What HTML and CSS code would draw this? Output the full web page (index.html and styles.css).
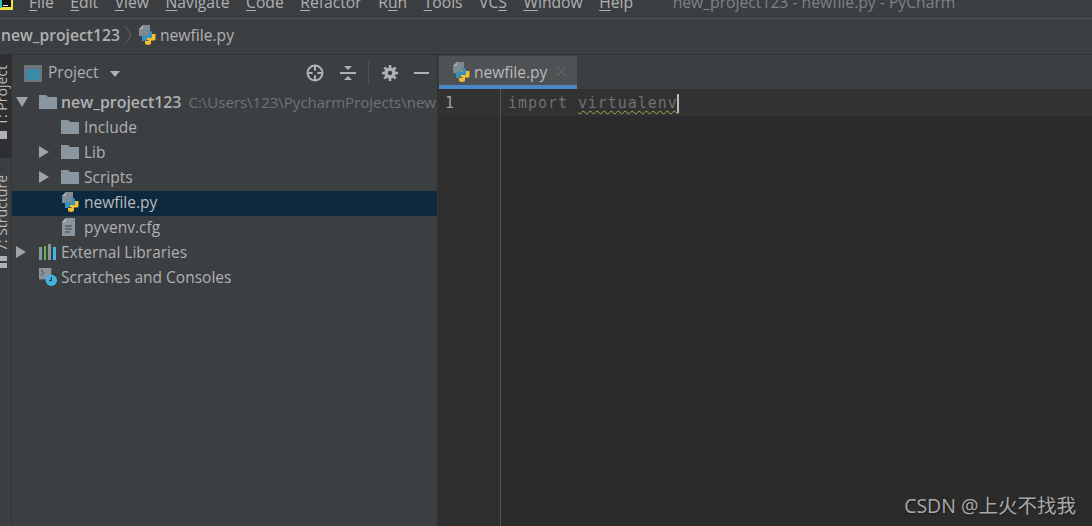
FILE: index.html
```html
<!DOCTYPE html>
<html lang="en">
<head>
    <meta charset="UTF-8">
    <title>new_project123 - newfile.py - PyCharm</title>
    <link rel="stylesheet" href="styles.css">
</head>
<body>
    <svg class="sprites" width="0" height="0">
        <symbol id="folder" viewBox="0 0 18 15">
            <path d="M0 1h7l2 2h9v12H0z" fill="#8a969f"/>
        </symbol>
        <symbol id="py" viewBox="0 0 18 20">
            <path d="M5 0h7v11H1V4z" fill="#7f8b93"/>
            <path d="M1 4h4V0z" fill="#a5afb6"/>
            <path d="M8 7h4v3H7v2H4v4h3v-3h5v-2h2V7.500C14 6.500 13 6 12 6H9z" fill="#3d8fba"/>
            <path d="M3.500 12C3.500 10.500 5 10 6 10h5v-3h3v7c0 1-1 1.500-2 1.500H7z" fill="#3d8fba"/>
            <path d="M9 13h5V9h3.500v5c0 1-1 1.500-2 1.500H13V18c0 1-1 2-3 2s-3-1-3-2v-2h3.500v-1H9z" fill="#f0c02f"/>
        </symbol>
    </svg>

    <div class="menubar">
        <svg class="app-logo" width="13" height="10" viewBox="0 0 13 10">
            <rect width="13" height="10" fill="#f4e23a"/>
            <rect x="2" width="9" height="7" fill="#111"/>
            <rect x="0" y="0" width="2" height="8" fill="#2fc4b0"/>
            <rect x="3" y="5" width="5" height="1" fill="#eee"/>
        </svg>
        <span class="menu-item"><u>F</u>ile</span>
        <span class="menu-item"><u>E</u>dit</span>
        <span class="menu-item"><u>V</u>iew</span>
        <span class="menu-item"><u>N</u>avigate</span>
        <span class="menu-item"><u>C</u>ode</span>
        <span class="menu-item"><u>R</u>efactor</span>
        <span class="menu-item">R<u>u</u>n</span>
        <span class="menu-item"><u>T</u>ools</span>
        <span class="menu-item">VC<u>S</u></span>
        <span class="menu-item"><u>W</u>indow</span>
        <span class="menu-item"><u>H</u>elp</span>
        <span class="window-title">new_project123 - newfile.py - PyCharm</span>
    </div>

    <div class="navbar">
        <b>new_project123</b>
        <svg class="crumb-arrow" width="8" height="22" viewBox="0 0 8 22">
            <path d="M1 2l6 9-6 9" fill="none" stroke="#5e6264"/>
        </svg>
        <svg class="file-icon" width="18" height="20"><use href="#py"/></svg>
        <span>newfile.py</span>
    </div>

    <div class="workspace">
        <div class="toolstrip">
            <div class="strip-tab active">
                <span class="strip-label">1: Project</span>
                <span class="strip-icon"></span>
            </div>
            <div class="strip-tab">
                <span class="strip-label">7: Structure</span>
                <span class="strip-icon grid"></span>
            </div>
        </div>

        <div class="project-panel">
            <div class="panel-header">
                <svg width="18" height="17" viewBox="0 0 18 17">
                    <rect width="18" height="17" fill="#6e7478"/>
                    <rect x="2" y="4" width="14" height="11" fill="#3d8aa8"/>
                </svg>
                <span class="panel-title">Project</span>
                <span class="caret"></span>
                <span class="spacer"></span>
                <svg class="tool" width="20" height="20" viewBox="0 0 20 20">
                    <circle cx="10" cy="10" r="7.500" fill="none" stroke="#afb1b3" stroke-width="2"/>
                    <path d="M10 2v16M2 10h16" stroke="#afb1b3" stroke-width="2"/>
                    <circle cx="10" cy="10" r="2.500" fill="#3c3f41"/>
                </svg>
                <svg class="tool collapse" width="16" height="18" viewBox="0 0 16 18">
                    <path d="M0 9h16" stroke="#afb1b3" stroke-width="2"/>
                    <path d="M4 2h8L8 6zM4 16h8l-4-4z" fill="#afb1b3"/>
                </svg>
                <span class="divider"></span>
                <svg class="tool gear" width="16" height="16" viewBox="0 0 16 16">
                    <circle cx="8" cy="8" r="4" fill="none" stroke="#afb1b3" stroke-width="3.500"/>
                    <path d="M8 0v3M8 13v3M0 8h3M13 8h3M2.300 2.300l2 2M11.700 11.700l2 2M13.700 2.300l-2 2M4.300 11.700l-2 2" stroke="#afb1b3" stroke-width="2.600"/>
                </svg>
                <span class="minimize"></span>
            </div>

            <div class="tree">
                <div class="row depth-0">
                    <span class="arrow down"></span>
                    <svg class="icon" width="18" height="15"><use href="#folder"/></svg>
                    <b class="root-name">new_project123</b>
                    <span class="path">C:\Users\123\PycharmProjects\new_project123</span>
                </div>
                <div class="row depth-1">
                    <span class="arrow none"></span>
                    <svg class="icon" width="18" height="15"><use href="#folder"/></svg>
                    <span>Include</span>
                </div>
                <div class="row depth-1">
                    <span class="arrow"></span>
                    <svg class="icon" width="18" height="15"><use href="#folder"/></svg>
                    <span>Lib</span>
                </div>
                <div class="row depth-1">
                    <span class="arrow"></span>
                    <svg class="icon" width="18" height="15"><use href="#folder"/></svg>
                    <span>Scripts</span>
                </div>
                <div class="row depth-1 selected">
                    <span class="arrow none"></span>
                    <svg class="icon" width="18" height="20"><use href="#py"/></svg>
                    <span>newfile.py</span>
                </div>
                <div class="row depth-1">
                    <span class="arrow none"></span>
                    <svg class="icon" width="18" height="18" viewBox="0 0 18 18">
                        <path d="M5 0h9v18H1V4z" fill="#8a969f"/>
                        <path d="M1 4h4V0z" fill="#b2bac0"/>
                        <path d="M4 8h7M4 11h7M4 14h5" stroke="#3c3f41"/>
                    </svg>
                    <span>pyvenv.cfg</span>
                </div>
                <div class="row depth-0">
                    <span class="arrow"></span>
                    <svg class="icon" width="18" height="16" viewBox="0 0 18 16">
                        <rect y="3" width="3" height="13" fill="#8a969f"/>
                        <rect x="5" y="2" width="2" height="14" fill="#62b543"/>
                        <rect x="9" y="0" width="3" height="16" fill="#8a969f"/>
                        <rect x="14" y="3" width="3" height="13" fill="#40b6e0"/>
                    </svg>
                    <span>External Libraries</span>
                </div>
                <div class="row depth-0">
                    <span class="arrow none"></span>
                    <svg class="icon" width="18" height="18" viewBox="0 0 19 19">
                        <rect width="13" height="12" fill="#8a969f"/>
                        <path d="M2 2l3 3-3 3" fill="none" stroke="#3c3f41"/>
                        <circle cx="13" cy="13" r="6" fill="#40b6e0"/>
                        <path d="M13 9.500V13.500h-2.500" fill="none" stroke="#2b2b2b" stroke-width="1.200"/>
                    </svg>
                    <span>Scratches and Consoles</span>
                </div>
            </div>
        </div>

        <div class="editor">
            <div class="tabbar">
                <div class="tab">
                    <svg width="18" height="20"><use href="#py"/></svg>
                    <span>newfile.py</span>
                    <svg class="tab-close" width="11" height="11" viewBox="0 0 11 11">
                        <path d="M1 1l9 9M10 1l-9 9" stroke="#6e7275"/>
                    </svg>
                </div>
            </div>
            <div class="code-area">
                <div class="gutter"><div class="line-number">1</div></div>
                <div class="code">
                    <div class="current-line"><span class="keyword">import</span> <span class="weak-warning">virtualenv</span><span class="caret-bar"></span></div>
                </div>
            </div>
            <div class="watermark">CSDN @上火不找我</div>
        </div>
    </div>
</body>
</html>
```

FILE: styles.css
```css
* {
    box-sizing: border-box;
}

body {
    font-family: "Open Sans", "Noto Sans CJK SC", sans-serif;
    display: flex;
    flex-direction: column;
    margin: 0;
    height: 526px;
    overflow: hidden;
    background-color: #3c3f41;
    color: #afb1b3;
    font-size: 15.500px;
}

.sprites {
    display: block;
    height: 0;
}

.menubar {
    display: flex;
    align-items: flex-end;
    height: 19px;
    flex: none;
    border-bottom: 1px solid #515151;
    padding-bottom: 6px;
    line-height: 20px;
    font-size: 15.700px;
    overflow: hidden;
    white-space: nowrap;
}

.app-logo {
    margin-right: 16px;
    align-self: flex-start;
}

.menu-item {
    margin-right: 16.500px;
}

.menu-item u {
    text-underline-offset: 2px;
}

.window-title {
    margin-left: 23px;
    color: #7f8285;
}

.navbar {
    display: flex;
    align-items: center;
    height: 36px;
    flex: none;
    border-bottom: 1px solid #323232;
    white-space: nowrap;
    font-size: 15.700px;
    padding-bottom: 3px;
}

.navbar b {
    font-weight: 600;
    margin-left: 1px;
}

.crumb-arrow {
    margin: 0 6px 0 4px;
}

.navbar span {
    margin-left: 4px;
}

.workspace {
    display: flex;
    flex: 1;
    min-height: 0;
}

.toolstrip {
    width: 12px;
    flex: none;
    border-right: 1px solid #323232;
    overflow: hidden;
}

.strip-tab {
    display: flex;
    flex-direction: column;
    align-items: center;
    width: 12px;
    height: 103px;
    padding-top: 10px;
    margin-bottom: 7px;
}

.strip-tab.active {
    background-color: #2d2f30;
}

.strip-label {
    writing-mode: vertical-rl;
    transform: rotate(180deg);
    font-size: 14px;
    line-height: 12px;
    white-space: nowrap;
    margin-left: -8px;
    color: #bbbbbb;
}

.strip-icon {
    display: block;
    width: 8px;
    height: 8px;
    margin: 5px 0 0 -6px;
    background-color: #afb1b3;
    flex: none;
}

.strip-icon.grid {
    height: 12px;
    background-color: transparent;
    background-image: linear-gradient(#afb1b3 5px, transparent 5px, transparent 7px, #afb1b3 7px);
}

.project-panel {
    width: 426px;
    flex: none;
    border-right: 1px solid #323232;
    overflow: hidden;
}

.panel-header {
    display: flex;
    align-items: center;
    height: 36px;
    padding: 0 8px 0 12px;
}

.panel-title {
    margin-left: 6px;
    padding-bottom: 2px;
}

.caret {
    width: 0;
    height: 0;
    margin: 2px 0 0 11px;
    border-left: 5.500px solid transparent;
    border-right: 5.500px solid transparent;
    border-top: 6px solid #afb1b3;
}

.spacer {
    flex: 1;
}

.tool {
    flex: none;
}

.collapse {
    margin-left: 15px;
}

.divider {
    width: 1px;
    height: 24px;
    margin: 0 13px 0 12px;
    background-color: #515151;
}

.minimize {
    width: 15px;
    height: 2px;
    margin-left: 16px;
    background-color: #afb1b3;
}

.row {
    display: flex;
    align-items: center;
    height: 25px;
    padding-bottom: 4px;
    white-space: nowrap;
}

.depth-0 {
    padding-left: 4px;
}

.depth-1 {
    padding-left: 27px;
}

.selected {
    background-color: #0d293e;
    color: #bbbbbb;
}

.arrow {
    width: 0;
    height: 0;
    flex: none;
    margin-right: 12px;
    border-top: 6px solid transparent;
    border-bottom: 6px solid transparent;
    border-left: 10px solid #a0a3a5;
}

.depth-0 .arrow {
    margin-right: 13px;
}

.arrow.none {
    border-left-color: transparent;
}

.depth-0 .arrow.down {
    border: 0;
    margin-right: 11px;
    border-left: 6px solid transparent;
    border-right: 6px solid transparent;
    border-top: 10px solid #a0a3a5;
}

.icon {
    flex: none;
    margin-right: 5px;
}

.depth-0 .icon {
    margin-right: 4px;
}

.root-name {
    font-weight: 600;
    font-size: 15.900px;
}

.path {
    margin-left: 7px;
    font-size: 15px;
    color: #6f7375;
}

.editor {
    position: relative;
    display: flex;
    flex-direction: column;
    flex: 1;
    min-width: 0;
    background-color: #2b2b2b;
}

.tabbar {
    display: flex;
    height: 34px;
    flex: none;
    padding-top: 1px;
    background-color: #3c3f41;
}

.tab {
    display: flex;
    align-items: center;
    width: 138px;
    margin-left: 1px;
    padding: 2px 0 0 13px;
    background-color: #4e5254;
    border-bottom: 4px solid #4a88c7;
    color: #bbbbbb;
    font-size: 15.500px;
}

.tab span {
    margin-left: 4px;
}

.tab-close {
    margin-left: 9px;
}

.code-area {
    display: flex;
    flex: 1;
    min-height: 0;
}

.gutter {
    width: 63px;
    flex: none;
    border-right: 1px solid #555555;
    background-color: #2f2f2f;
}

.line-number {
    height: 27px;
    padding-left: 7px;
    font: 15px/28px "DejaVu Sans Mono", monospace;
    color: #a0a0a0;
    background-color: #323232;
}

.code {
    flex: 1;
    background-color: #2b2b2b;
}

.current-line {
    height: 27px;
    padding-left: 7px;
    font: 15px/28px "DejaVu Sans Mono", monospace;
    letter-spacing: 0.950px;
    background-color: #323232;
    color: #6f7173;
    white-space: nowrap;
}

.weak-warning {
    text-decoration: underline wavy #a8a84a 1px;
    text-underline-offset: 2px;
}

.caret-bar {
    display: inline-block;
    width: 2px;
    height: 19px;
    vertical-align: middle;
    background-color: #bbbbbb;
    margin-left: -1px;
}

.watermark {
    position: absolute;
    right: 16px;
    bottom: 9px;
    font-size: 19.500px;
    line-height: 22px;
    color: #a9a9a9;
    text-shadow: 1px 1px 1px #1c1c1c;
}
```
